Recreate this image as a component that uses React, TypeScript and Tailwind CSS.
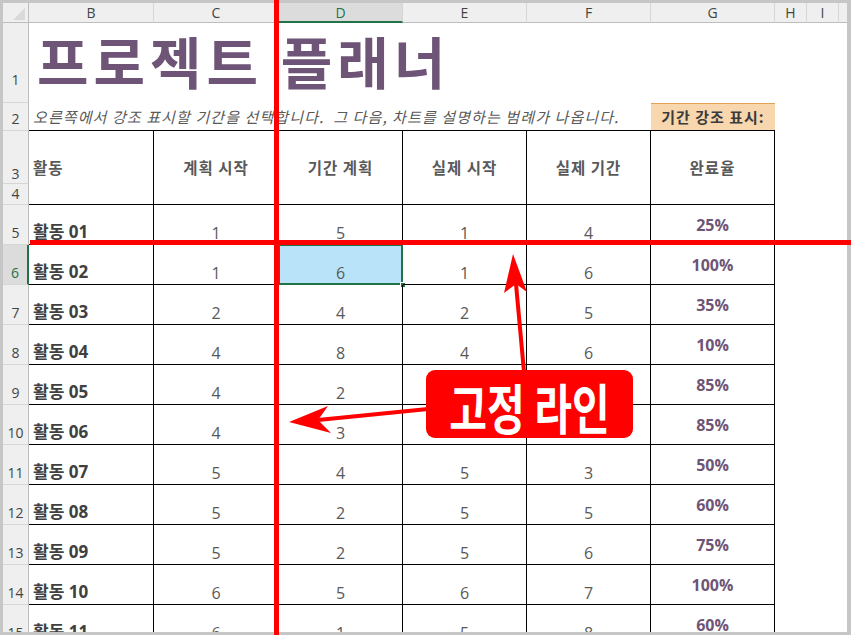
import React from "react";

const KR = "font-['Noto_Sans_CJK_KR','Noto_Sans',sans-serif]";
const NUM = "font-['Open_Sans','Noto_Sans_CJK_KR',sans-serif]";

type Activity = { no: string; c: number; d: number; e?: number; f?: number; pct: string };

// rows 05/06 have E and F under the callout, so they are left blank
const activities: Activity[] = [
  { no: "01", c: 1, d: 5, e: 1, f: 4, pct: "25%" },
  { no: "02", c: 1, d: 6, e: 1, f: 6, pct: "100%" },
  { no: "03", c: 2, d: 4, e: 2, f: 5, pct: "35%" },
  { no: "04", c: 4, d: 8, e: 4, f: 6, pct: "10%" },
  { no: "05", c: 4, d: 2, pct: "85%" },
  { no: "06", c: 4, d: 3, pct: "85%" },
  { no: "07", c: 5, d: 4, e: 5, f: 3, pct: "50%" },
  { no: "08", c: 5, d: 2, e: 5, f: 5, pct: "60%" },
  { no: "09", c: 5, d: 2, e: 5, f: 6, pct: "75%" },
  { no: "10", c: 6, d: 5, e: 6, f: 7, pct: "100%" },
  { no: "11", c: 6, d: 1, e: 5, f: 8, pct: "60%" },
];

const letters = ["B", "C", "D", "E", "F", "G", "H", "I"];

const headers = ["계획 시작", "기간 계획", "실제 시작", "실제 기간", "완료율"];

const RowHead = ({ n, pb = "pb-[3px]", sel = false }: { n: number; pb?: string; sel?: boolean }) => (
  <div
    className={`flex items-end justify-center ${pb} border-b border-b-[#d6d6d6] text-[14px] leading-[16px] ${NUM} ${
      sel
        ? "bg-[#dcdcdc] text-[#217346] border-r-2 border-r-[#217346]"
        : "bg-[#efefef] text-[#444] border-r border-r-[#bdbdbd]"
    }`}
  >
    {n}
  </div>
);

const App = () => {
  return (
    <div className="relative w-[851px] h-[635px] overflow-hidden bg-[#c6c6c6] pt-[3px] pl-[3px] pr-[4px] pb-[3px]">
      <div className="h-full overflow-hidden bg-white">
        <div className="grid grid-cols-[26px_125px_125px_124px_124px_124px_124px_32px_32px_1fr] grid-rows-[20px_80px_28px_53px_21px_repeat(11,40px)]">
          {/* Column headers */}
          <div className="relative bg-[#efefef] border-r border-b border-[#bdbdbd]">
            <svg className="absolute inset-0" width="26" height="20">
              <polygon points="22,5 22,17 10,17" fill="#d9d9d9" />
            </svg>
          </div>
          {letters.map((l) => (
            <div
              key={l}
              className={`flex items-center justify-center border-r border-r-[#d6d6d6] text-[14px] ${NUM} ${
                l === "D"
                  ? "bg-[#dcdcdc] text-[#217346] border-b-2 border-b-[#217346]"
                  : "bg-[#efefef] text-[#444] border-b border-b-[#bdbdbd]"
              }`}
            >
              {l}
            </div>
          ))}
          <div className="bg-[#efefef] border-b border-b-[#bdbdbd]" />

          {/* Row 1: title */}
          <RowHead n={1} pb="pb-[14px]" />
          <div className="col-span-6 pl-[8px] pt-[9px]">
            <span className={`text-[56px] font-bold leading-[56px] tracking-[5px] text-[#6e5476] whitespace-nowrap ${KR}`}>
              프로젝트 플래너
            </span>
          </div>
          <div className="col-span-3" />

          {/* Row 2: subtitle */}
          <RowHead n={2} />
          <div
            className={`col-span-5 flex items-end pb-[4px] pl-[4px] border-b border-black italic text-[15px] leading-[18px] tracking-[1.1px] text-[#595959] whitespace-pre ${KR}`}
          >
            오른쪽에서 강조 표시할 기간을 선택합니다.  그 다음, 차트를 설명하는 범례가 나옵니다.
          </div>
          <div
            className={`flex items-center justify-center bg-[#f8d7ae] border-t border-t-[#e2a25a] border-b border-b-black text-[15px] tracking-[1px] font-bold text-[#3b3b3b] ${KR}`}
          >
            기간 강조 표시:
          </div>
          <div className="col-span-3" />

          {/* Rows 3-4: table header */}
          <RowHead n={3} pb="pb-[1px]" />
          <div className={`row-span-2 flex items-center pl-[4px] border-r border-b border-black text-[15.5px] tracking-[1px] font-bold text-[#595959] ${KR}`}>
            활동
          </div>
          {headers.map((h) => (
            <div
              key={h}
              className={`row-span-2 flex items-center justify-center border-r border-b border-black text-[15.5px] tracking-[1px] font-bold text-[#595959] ${KR}`}
            >
              {h}
            </div>
          ))}
          <div className="col-span-3 row-span-2" />
          <RowHead n={4} pb="pb-[2px]" />

          {/* Data rows */}
          {activities.map((a, i) => {
            const rowNo = i + 5;
            return (
              <React.Fragment key={a.no}>
                <RowHead n={rowNo} sel={rowNo === 6} />
                <div className={`flex items-end pb-[2px] pl-[4px] border-r border-b border-black text-[17px] leading-[20px] font-bold text-[#404040] ${NUM}`}>
                  활동 {a.no}
                </div>
                {[a.c, a.d, a.e, a.f].map((v, j) => (
                  <div
                    key={j}
                    className={`relative flex items-end justify-center pb-[3px] border-r border-b border-black text-[16px] leading-[16px] text-[#595959] ${NUM} ${
                      rowNo === 6 && j === 1 ? "bg-[#b9e3f8]" : ""
                    }`}
                  >
                    {v}
                    {rowNo === 6 && j === 1 && (
                      <>
                        <div className="absolute inset-[-1px] border-2 border-[#217346]" />
                        <div className="absolute right-[-4px] bottom-[-4px] w-[6px] h-[6px] bg-[#217346] border border-white" />
                      </>
                    )}
                  </div>
                ))}
                <div className={`flex items-center justify-center border-r border-b border-black text-[16px] font-bold text-[#6e5476] ${NUM}`}>
                  {a.pct}
                </div>
                <div className="col-span-3" />
              </React.Fragment>
            );
          })}
        </div>
      </div>

      {/* Frozen-pane markers */}
      <div className="absolute left-[274px] top-0 h-full w-[5px] bg-[#ff0000]" />
      <div className="absolute left-[30px] right-0 top-[240px] h-[5px] bg-[#ff0000]" />

      {/* Arrows */}
      <svg className="absolute inset-0 pointer-events-none" width="851" height="635">
        <line x1="428" y1="409" x2="318" y2="420" stroke="#ff0000" strokeWidth="4" />
        <polygon points="289,422 328,406 318,420 331,433" fill="#ff0000" />
        <line x1="524" y1="372" x2="516" y2="284" stroke="#ff0000" strokeWidth="4" />
        <polygon points="513,254 527,292 516,284 504,293" fill="#ff0000" />
      </svg>

      {/* Callout */}
      <div className="absolute left-[426px] top-[370px] w-[207px] h-[68px] rounded-[9px] bg-[#ff0000] flex items-center justify-center">
        <span className={`text-white text-[54px] font-bold leading-none whitespace-nowrap scale-x-[0.76] translate-y-[3px] ${KR}`}>
          고정 라인
        </span>
      </div>
    </div>
  );
};

export default App;
